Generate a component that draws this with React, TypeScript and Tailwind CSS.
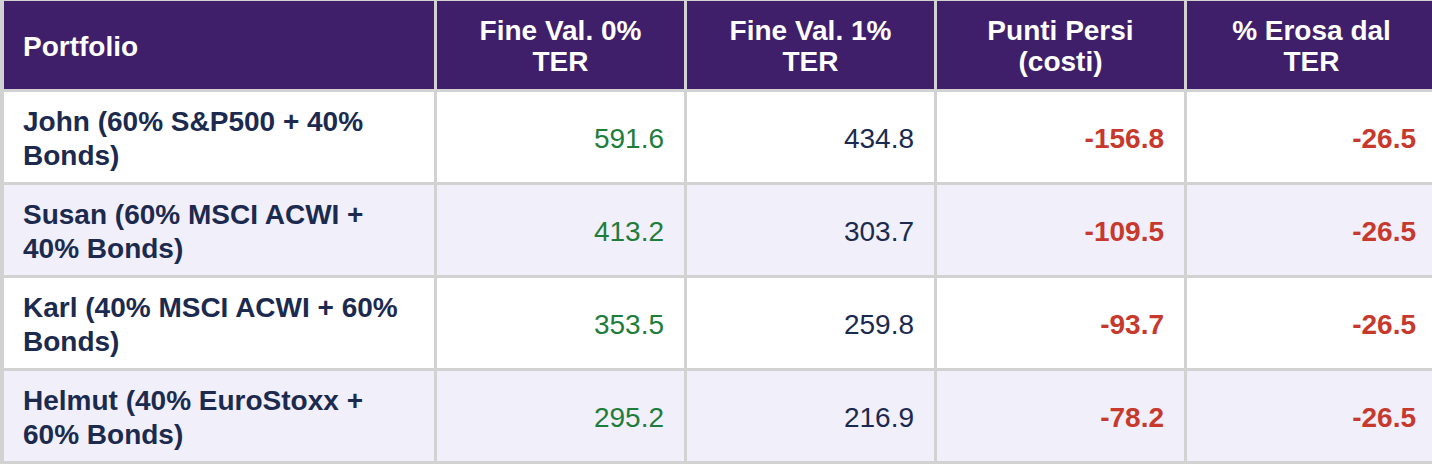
const rows = [
  { name: "John (60% S&P500 + 40% Bonds)", v0: "591.6", v1: "434.8", lost: "-156.8", eroded: "-26.5" },
  { name: "Susan (60% MSCI ACWI + 40% Bonds)", v0: "413.2", v1: "303.7", lost: "-109.5", eroded: "-26.5" },
  { name: "Karl (40% MSCI ACWI + 60% Bonds)", v0: "353.5", v1: "259.8", lost: "-93.7", eroded: "-26.5" },
  { name: "Helmut (40% EuroStoxx + 60% Bonds)", v0: "295.2", v1: "216.9", lost: "-78.2", eroded: "-26.5" },
]

const headers = ["Fine Val. 0% TER", "Fine Val. 1% TER", "Punti Persi (costi)", "% Erosa dal TER"]

export default function App() {
  return (
    <div className="h-[464px] w-[1432px] overflow-hidden bg-white font-['Liberation_Sans',Arial,sans-serif]">
      <div className="grid w-[1436px] grid-cols-[430px_247px_247px_247px_1fr] grid-rows-[88px_90px_90px_90px_90px] gap-[3px] bg-[#d2d2d2] pb-[3px] pl-[4px] pt-[1px] text-[28px] leading-[31px]">
        <div className="flex items-center bg-[#3f1f69] px-[19px] pt-[2px] font-bold text-white">Portfolio</div>
        {headers.map((h) => (
          <div key={h} className="flex items-center justify-center bg-[#3f1f69] px-8 pt-[1px] text-center font-bold text-white">
            {h}
          </div>
        ))}
        {rows.map((r, i) => {
          const bg = i % 2 === 0 ? "bg-white" : "bg-[#f1eff9]"
          return (
            <div key={r.name} className="contents">
              <div className={`flex items-center pl-[19px] pr-6 pt-[3px] font-bold leading-[34px] text-[#1b2a4e] ${bg}`}>{r.name}</div>
              <div className={`flex items-center justify-end pr-[20px] pt-[2px] text-[#1f7d3c] ${bg}`}>{r.v0}</div>
              <div className={`flex items-center justify-end pr-[20px] pt-[2px] text-[#1b2a4e] ${bg}`}>{r.v1}</div>
              <div className={`flex items-center justify-end pr-[20px] pt-[2px] font-bold text-[#c8392d] ${bg}`}>{r.lost}</div>
              <div className={`flex items-center justify-end pr-[20px] pt-[2px] font-bold text-[#c8392d] ${bg}`}>{r.eroded}</div>
            </div>
          )
        })}
      </div>
    </div>
  )
}
